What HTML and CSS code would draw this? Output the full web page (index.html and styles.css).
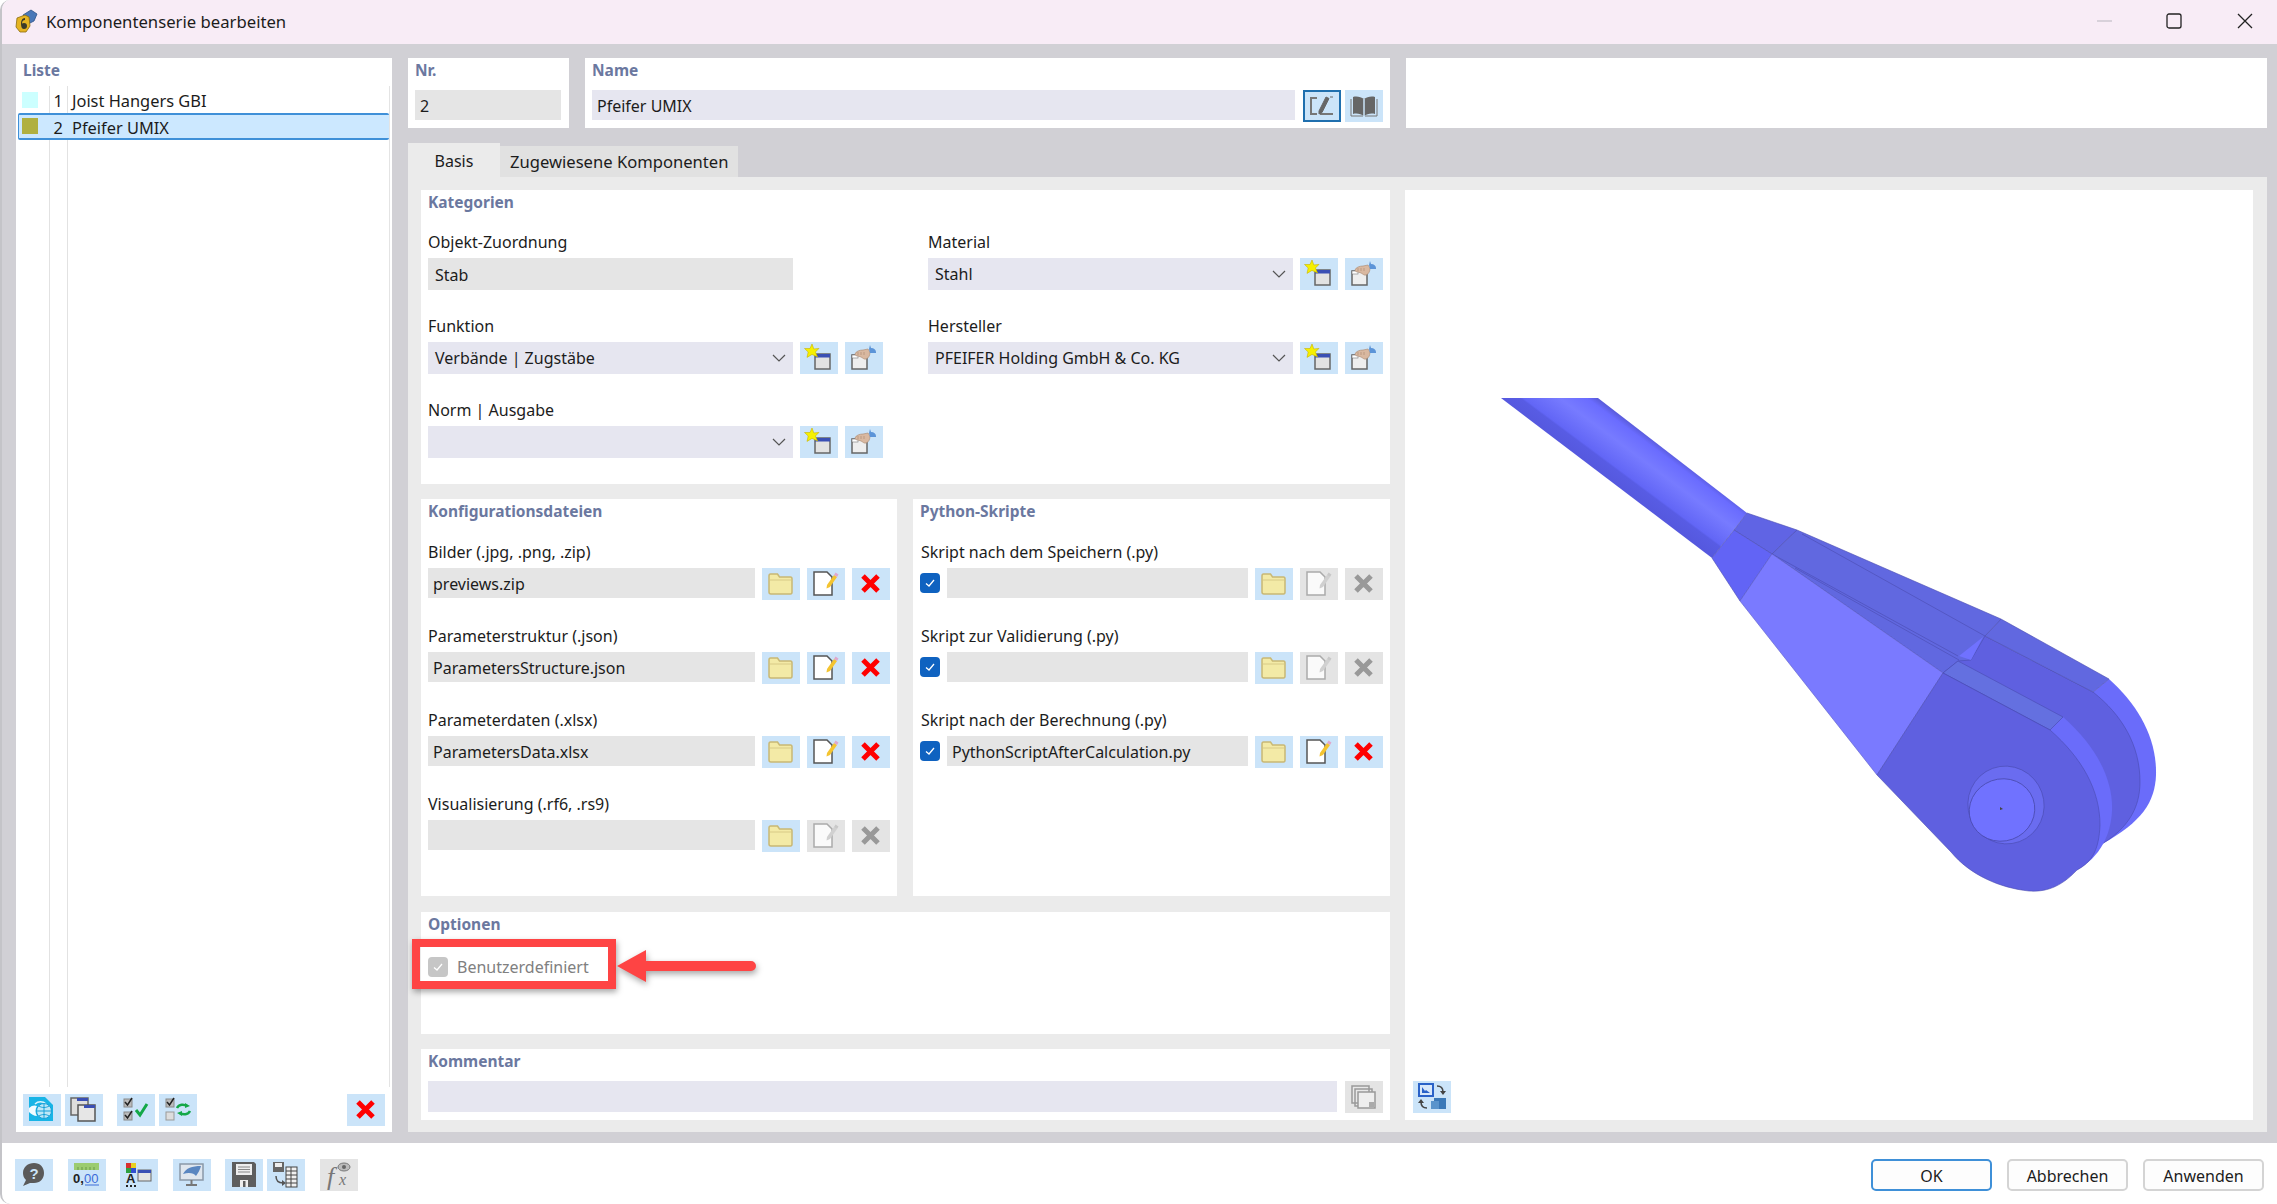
FILE: index.html
```html
<!DOCTYPE html>
<html lang="de">
<head>
    <meta charset="UTF-8">
    <title>Komponentenserie bearbeiten</title>
    <link rel="stylesheet" href="styles.css">
</head>
<body>

<!-- Icon set -->
<svg class="icon-defs" width="0" height="0">
    <defs>
        <symbol id="i-new" viewBox="0 0 38 32">
            <rect x="15" y="12" width="15" height="15" fill="#e2e2e2" stroke="#666" stroke-width="1.5"/>
            <rect x="15" y="12" width="15" height="3.5" fill="#3a4fb4"/>
            <path d="M12 2l1.800 5 5.200-.6-3.600 3.600 2.200 5-5.600-2.600-5 3 1.200-5.400L4.500 6.500l5.500 0z" fill="#f6f000" stroke="#c8b400" stroke-width=".6"/>
        </symbol>
        <symbol id="i-hand" viewBox="0 0 38 32">
            <rect x="7" y="13" width="15" height="14" fill="#eee" stroke="#666" stroke-width="1.5"/>
            <rect x="7" y="13" width="6" height="3" fill="#fff" stroke="#777" stroke-width=".6"/>
            <path d="M10 12c1-3 5-4 8-4l5-1 2 3c0 3-1 6-4 7-2 .6-3-1-5-2l-3-1c-2 0-3-1-3-2z" fill="#d9b8a0" stroke="#a88870" stroke-width=".6"/>
            <path d="M13 10v3M16 10v3M19 10v3" stroke="#a88870" stroke-width=".6"/>
            <path d="M25 3l1 3c3 0 5 2 5 4v1h-6l-1-4z" fill="#5c94d8"/>
        </symbol>
        <symbol id="i-folder" viewBox="0 0 38 32">
            <path d="M7 8c0-1 .6-2 1.500-2h7l2 3h11c1 0 1.500 1 1.500 2v13c0 1-.6 2-1.500 2H9c-1 0-2-1-2-2z" fill="#f3eaa6" stroke="#c9b874" stroke-width="1.500"/>
            <path d="M8 12h21" stroke="#d8ca86" stroke-width="1"/>
        </symbol>
        <symbol id="i-doc" viewBox="0 0 38 32">
            <path d="M7 4h13l5 5v18H7z" fill="#fff" stroke="#555" stroke-width="1.500"/>
            <path d="M20 17l7-10 3 2-7 10-3.500 1.500z" fill="#f4c430"/>
            <path d="M27 7l1.500-2.500 3 2L30 9z" fill="#e0a8cc"/>
        </symbol>
        <symbol id="i-doc-off" viewBox="0 0 38 32">
            <path d="M7 4h13l5 5v18H7z" fill="#fafafa" stroke="#aaa" stroke-width="1.500"/>
            <path d="M20 17l7-10 3 2-7 10-3.500 1.500z" fill="#d0d0d0"/>
            <path d="M27 7l1.500-2.500 3 2L30 9z" fill="#c8c8c8"/>
        </symbol>
        <symbol id="i-x" viewBox="0 0 38 32">
            <path d="M11 8l15 15M26 8L11 23" fill="none" stroke="currentColor" stroke-width="5"/>
        </symbol>
        <symbol id="i-edit" viewBox="0 0 38 32">
            <path d="M14 8H8v16h6M17 24h13" fill="none" stroke="#777" stroke-width="2"/>
            <path d="M16 21l7-14 3 1.500-7 14-3 1.500zM27 7h3" fill="#666" stroke="#666" stroke-width="1"/>
        </symbol>
        <symbol id="i-book" viewBox="0 0 38 32">
            <path d="M19 9c-3-2-7-3-11-2v17c4-1 8 0 11 2 3-2 7-3 11-2V7c-4-1-8 0-11 2z" fill="#666"/>
            <path d="M19 9v17" stroke="#cbe4f9" stroke-width="1.500"/>
            <path d="M6 9v17h12M32 9v17H20" fill="none" stroke="#777" stroke-width="1"/>
        </symbol>
        <symbol id="i-globe" viewBox="0 0 38 32">
            <path d="M6 3h16l8 8v16H6z" fill="#18b4e6"/>
            <path d="M12 10c3-3 8-3 11 0" fill="none" stroke="#d8f2fb" stroke-width="1.500"/>
            <circle cx="21" cy="17" r="7.500" fill="#bfe8f7" stroke="#18a0d8" stroke-width="1"/>
            <path d="M14 17h14M21 10v14M16 12c3 2 7 2 10 0M16 22c3-2 7-2 10 0" fill="none" stroke="#18a0d8" stroke-width="1"/>
            <path d="M6 14c3-3 6-3 8-2-2 3-2 7 0 10-3 0-6-2-8-4z" fill="#f0fbff"/>
        </symbol>
        <symbol id="i-windows" viewBox="0 0 38 32">
            <rect x="6" y="4" width="17" height="17" fill="#ddd" stroke="#666" stroke-width="1.500"/>
            <rect x="12" y="4" width="11" height="3" fill="#3a4fb4"/>
            <rect x="13" y="11" width="17" height="16" fill="#e6e6e6" stroke="#555" stroke-width="1.500"/>
            <rect x="19" y="11" width="11" height="3" fill="#3a4fb4"/>
        </symbol>
        <symbol id="i-checks" viewBox="0 0 38 32">
            <rect x="7" y="5" width="8" height="8" fill="#bbb" stroke="#888"/>
            <rect x="7" y="18" width="8" height="8" fill="#bbb" stroke="#888"/>
            <path d="M8 8l2.500 3L15 4M8 21l2.500 3L15 17" fill="none" stroke="#222" stroke-width="1.500"/>
            <path d="M19 16l4 5 7-11" fill="none" stroke="#14a848" stroke-width="3"/>
        </symbol>
        <symbol id="i-swap-checks" viewBox="0 0 38 32">
            <rect x="7" y="5" width="8" height="8" fill="#bbb" stroke="#888"/>
            <rect x="7" y="18" width="8" height="8" fill="#ddd" stroke="#999"/>
            <path d="M8 8l2.500 3L15 4" fill="none" stroke="#222" stroke-width="1.500"/>
            <path d="M18 14c2-4 7-4 10-2M31 17c-2 4-7 4-10 2" fill="none" stroke="#14a848" stroke-width="2.500"/>
            <path d="M26 9l5 3-5 2zM23 22l-5-3 5-2z" fill="#14a848"/>
        </symbol>
        <symbol id="i-help" viewBox="0 0 38 32">
            <path d="M19 4c6 0 10 4 10 10s-4 10-10 10h-4l-7 3 3-6c-2-2-3-4-3-7 0-6 5-10 11-10z" fill="#5a5a5a"/>
            <text x="19" y="20" class="i-txt i-help-q">?</text>
        </symbol>
        <symbol id="i-num" viewBox="0 0 38 32">
            <rect x="6" y="4" width="25" height="7" fill="#9ccc70"/>
            <path d="M10 8v3M14 8v3M18 8v3M22 8v3M26 8v3" stroke="#6a9a48"/>
            <text x="5" y="24" class="i-txt i-num-a">0,</text>
            <text x="16" y="24" class="i-txt i-num-b">00</text>
            <path d="M17 26h14" stroke="#3c6cd8" stroke-width="1"/>
        </symbol>
        <symbol id="i-colors" viewBox="0 0 38 32">
            <rect x="6" y="4" width="5" height="5" fill="#d83030"/>
            <rect x="11" y="4" width="5" height="5" fill="#e8d020"/>
            <rect x="6" y="9" width="5" height="5" fill="#30a040"/>
            <rect x="11" y="9" width="5" height="5" fill="#3050d0"/>
            <text x="6" y="24" class="i-txt i-col-a">A</text>
            <path d="M6 27h2M10 27h2M14 27h2" stroke="#222" stroke-width="2"/>
            <rect x="18" y="11" width="13" height="11" fill="#e4e4e4" stroke="#666"/>
            <rect x="18" y="11" width="13" height="3" fill="#3a4fb4"/>
        </symbol>
        <symbol id="i-monitor" viewBox="0 0 38 32">
            <rect x="7" y="5" width="23" height="16" fill="#dfe6ee" stroke="#8a98a8" stroke-width="1.500"/>
            <path d="M10 15c3-6 9-8 18-8-1 4-3 7-5 10-2-3-7-4-13-2z" fill="#5a86c0"/>
            <path d="M18.500 21v4M13 26h11" stroke="#777" stroke-width="2"/>
        </symbol>
        <symbol id="i-save" viewBox="0 0 38 32">
            <path d="M7 3h22l2 2v23H7z" fill="#5e5e5e"/>
            <rect x="11" y="5" width="16" height="11" fill="#eee"/>
            <path d="M13 8h12M13 10.500h12M13 13h12" stroke="#888" stroke-width="1"/>
            <rect x="15" y="21" width="8" height="7" fill="#eee"/>
            <rect x="18" y="22" width="2.500" height="6" fill="#5e5e5e"/>
        </symbol>
        <symbol id="i-save-table" viewBox="0 0 38 32">
            <path d="M6 3h11v10H6z" fill="#666"/>
            <rect x="8" y="4" width="7" height="4" fill="#eee"/>
            <rect x="19" y="8" width="11" height="20" fill="#f0f0f0" stroke="#444"/>
            <path d="M19 12h11M19 16h11M19 20h11M19 24h11M24 8v20" stroke="#444" stroke-width="1"/>
            <path d="M9 17c0 5 3 7 7 7" fill="none" stroke="#555" stroke-width="1.500"/>
            <path d="M15 21l4 3-4 3z" fill="#555"/>
        </symbol>
        <symbol id="i-fx" viewBox="0 0 38 32">
            <text x="7" y="26" class="i-txt i-fx-a">f</text>
            <text x="19" y="26" class="i-txt i-fx-b">x</text>
            <ellipse cx="24" cy="8" rx="6" ry="4" fill="#bbb" stroke="#777"/>
            <circle cx="24" cy="8" r="2" fill="#666"/>
        </symbol>
        <symbol id="i-copy" viewBox="0 0 38 32">
            <path d="M7 5h17v17H7zM10 8h17v17H10z" fill="#e8e8e8" stroke="#999" stroke-width="1.500"/>
            <rect x="13" y="11" width="17" height="16" fill="#eee" stroke="#999" stroke-width="1.500"/>
            <rect x="24" y="21" width="5" height="5" fill="#aaa"/>
        </symbol>
        <symbol id="i-swap" viewBox="0 0 38 32">
            <rect x="6" y="3" width="14" height="12" fill="#d8e8fa" stroke="#2a62c8" stroke-width="2"/>
            <path d="M9 6v6h8l-4-3-1 1z" fill="#2a62c8"/>
            <rect x="21" y="17" width="12" height="11" fill="#3a78b8"/>
            <rect x="18" y="20" width="8" height="8" fill="#5a94cc"/>
            <path d="M24 5c4 0 6 2 6 6M14 27c-4 0-6-2-6-6" fill="none" stroke="#444" stroke-width="1.500"/>
            <path d="M27 10h6l-3 4zM11 22H5l3-4z" fill="#444"/>
        </symbol>
        <symbol id="i-tick" viewBox="0 0 20 20">
            <path d="M6 10.500l3 2.500 5-6" fill="none" stroke="#fff" stroke-width="1.300"/>
        </symbol>
        <symbol id="i-chev" viewBox="0 0 14 8">
            <path d="M1 1l6 6 6-6" fill="none" stroke="#555" stroke-width="1.200"/>
        </symbol>
    </defs>
</svg>

<div class="window">

    <!-- Title bar -->
    <div class="titlebar">
        <svg class="app-icon" width="24" height="24" viewBox="0 0 24 24">
            <path d="M9 6l8-5 6 4-3 7-6 3z" fill="#4a78b8" stroke="#2c5288" stroke-width=".8"/>
            <path d="M3 9l8-3 4 2 1 9-4 6H6l-4-5z" fill="#e6b422" stroke="#8a6c10" stroke-width=".8"/>
            <path d="M11 9c-3 0-4 3-4 6s1 5 3 5 3-1 3-3-1-3-3-3-2 1-2 1c0-3 1-4 3-4z" fill="#3a3a2a"/>
        </svg>
        <span class="title-text">Komponentenserie bearbeiten</span>
        <div class="win-controls">
            <svg width="16" height="16" viewBox="0 0 16 16"><path d="M0 8h15" stroke="#c4c0c8" stroke-width="1.200"/></svg>
            <svg class="win-max" width="16" height="16" viewBox="0 0 16 16"><rect x="1" y="1" width="14" height="14" rx="2" fill="none" stroke="#222" stroke-width="1.300"/></svg>
            <svg width="16" height="16" viewBox="0 0 16 16"><path d="M1 1l14 14M15 1L1 15" stroke="#222" stroke-width="1.300"/></svg>
        </div>
    </div>

    <div class="main">

        <!-- List -->
        <div class="list-panel">
            <div class="panel-title">Liste</div>
            <div class="list">
                <div class="list-row">
                    <span class="swatch swatch-cyan"></span>
                    <span class="list-no">1</span>
                    <span>Joist Hangers GBI</span>
                </div>
                <div class="list-row selected">
                    <span class="swatch swatch-olive"></span>
                    <span class="list-no">2</span>
                    <span>Pfeifer UMIX</span>
                </div>
            </div>
            <div class="list-tools">
                <button class="ib"><svg><use href="#i-globe"/></svg></button>
                <button class="ib"><svg><use href="#i-windows"/></svg></button>
                <button class="ib tool-gap"><svg><use href="#i-checks"/></svg></button>
                <button class="ib"><svg><use href="#i-swap-checks"/></svg></button>
                <button class="ib red tool-end"><svg><use href="#i-x"/></svg></button>
            </div>
        </div>

        <div class="content">

            <!-- Nr / Name -->
            <div class="head-row">
                <div class="panel nr-panel">
                    <div class="panel-title">Nr.</div>
                    <div class="input grey tight">2</div>
                </div>
                <div class="panel name-panel">
                    <div class="panel-title">Name</div>
                    <div class="row">
                        <div class="input lilac tight grow">Pfeifer UMIX</div>
                        <div class="name-btns">
                            <button class="ib focus"><svg><use href="#i-edit"/></svg></button>
                            <button class="ib"><svg><use href="#i-book"/></svg></button>
                        </div>
                    </div>
                </div>
                <div class="panel blank-panel"></div>
            </div>

            <!-- Tabs -->
            <div class="tabs">
                <div class="tab active">Basis</div>
                <div class="tab">Zugewiesene Komponenten</div>
            </div>

            <div class="tab-pane">
                <div class="form-col">

                    <div class="panel kat-panel">
                        <div class="panel-title">Kategorien</div>
                        <div class="kat-grid">
                            <div class="field">
                                <label>Objekt-Zuordnung</label>
                                <div class="row"><div class="input grey wide-pad grow">Stab</div><div class="btn-space"></div></div>
                            </div>
                            <div class="field">
                                <label>Material</label>
                                <div class="row">
                                    <div class="input lilac wide-pad grow select">Stahl<svg class="chev"><use href="#i-chev"/></svg></div>
                                    <button class="ib"><svg><use href="#i-new"/></svg></button>
                                    <button class="ib"><svg><use href="#i-hand"/></svg></button>
                                </div>
                            </div>
                            <div class="field">
                                <label>Funktion</label>
                                <div class="row">
                                    <div class="input lilac wide-pad grow select">Verbände | Zugstäbe<svg class="chev"><use href="#i-chev"/></svg></div>
                                    <button class="ib"><svg><use href="#i-new"/></svg></button>
                                    <button class="ib"><svg><use href="#i-hand"/></svg></button>
                                </div>
                            </div>
                            <div class="field">
                                <label>Hersteller</label>
                                <div class="row">
                                    <div class="input lilac wide-pad grow select">PFEIFER Holding GmbH &amp; Co. KG<svg class="chev"><use href="#i-chev"/></svg></div>
                                    <button class="ib"><svg><use href="#i-new"/></svg></button>
                                    <button class="ib"><svg><use href="#i-hand"/></svg></button>
                                </div>
                            </div>
                            <div class="field">
                                <label>Norm | Ausgabe</label>
                                <div class="row">
                                    <div class="input lilac wide-pad grow select"><svg class="chev"><use href="#i-chev"/></svg></div>
                                    <button class="ib"><svg><use href="#i-new"/></svg></button>
                                    <button class="ib"><svg><use href="#i-hand"/></svg></button>
                                </div>
                            </div>
                        </div>
                    </div>

                    <div class="files-row">
                        <div class="panel files-panel files-left">
                            <div class="panel-title">Konfigurationsdateien</div>
                            <div class="file-list">
                                <div class="field">
                                    <label>Bilder (.jpg, .png, .zip)</label>
                                    <div class="row">
                                        <div class="input grey tight grow">previews.zip</div>
                                        <button class="ib"><svg><use href="#i-folder"/></svg></button>
                                        <button class="ib"><svg><use href="#i-doc"/></svg></button>
                                        <button class="ib red"><svg><use href="#i-x"/></svg></button>
                                    </div>
                                </div>
                                <div class="field">
                                    <label>Parameterstruktur (.json)</label>
                                    <div class="row">
                                        <div class="input grey tight grow">ParametersStructure.json</div>
                                        <button class="ib"><svg><use href="#i-folder"/></svg></button>
                                        <button class="ib"><svg><use href="#i-doc"/></svg></button>
                                        <button class="ib red"><svg><use href="#i-x"/></svg></button>
                                    </div>
                                </div>
                                <div class="field">
                                    <label>Parameterdaten (.xlsx)</label>
                                    <div class="row">
                                        <div class="input grey tight grow">ParametersData.xlsx</div>
                                        <button class="ib"><svg><use href="#i-folder"/></svg></button>
                                        <button class="ib"><svg><use href="#i-doc"/></svg></button>
                                        <button class="ib red"><svg><use href="#i-x"/></svg></button>
                                    </div>
                                </div>
                                <div class="field">
                                    <label>Visualisierung (.rf6, .rs9)</label>
                                    <div class="row">
                                        <div class="input grey tight grow"></div>
                                        <button class="ib"><svg><use href="#i-folder"/></svg></button>
                                        <button class="ib off"><svg><use href="#i-doc-off"/></svg></button>
                                        <button class="ib off"><svg><use href="#i-x"/></svg></button>
                                    </div>
                                </div>
                            </div>
                        </div>

                        <div class="panel files-panel">
                            <div class="panel-title">Python-Skripte</div>
                            <div class="file-list">
                                <div class="field">
                                    <label class="label-py">Skript nach dem Speichern (.py)</label>
                                    <div class="row">
                                        <svg class="check"><use href="#i-tick"/></svg>
                                        <div class="input grey tight grow"></div>
                                        <button class="ib"><svg><use href="#i-folder"/></svg></button>
                                        <button class="ib off"><svg><use href="#i-doc-off"/></svg></button>
                                        <button class="ib off"><svg><use href="#i-x"/></svg></button>
                                    </div>
                                </div>
                                <div class="field">
                                    <label class="label-py">Skript zur Validierung (.py)</label>
                                    <div class="row">
                                        <svg class="check"><use href="#i-tick"/></svg>
                                        <div class="input grey tight grow"></div>
                                        <button class="ib"><svg><use href="#i-folder"/></svg></button>
                                        <button class="ib off"><svg><use href="#i-doc-off"/></svg></button>
                                        <button class="ib off"><svg><use href="#i-x"/></svg></button>
                                    </div>
                                </div>
                                <div class="field">
                                    <label class="label-py">Skript nach der Berechnung (.py)</label>
                                    <div class="row">
                                        <svg class="check"><use href="#i-tick"/></svg>
                                        <div class="input grey tight grow">PythonScriptAfterCalculation.py</div>
                                        <button class="ib"><svg><use href="#i-folder"/></svg></button>
                                        <button class="ib"><svg><use href="#i-doc"/></svg></button>
                                        <button class="ib red"><svg><use href="#i-x"/></svg></button>
                                    </div>
                                </div>
                            </div>
                        </div>
                    </div>

                    <div class="panel options-panel">
                        <div class="panel-title">Optionen</div>
                        <div class="option-line">
                            <svg class="check check-off"><use href="#i-tick"/></svg>
                            <span>Benutzerdefiniert</span>
                        </div>
                        <!-- red callout over the option -->
                        <div class="callout-box"></div>
                        <svg class="callout-arrow" width="150" height="40" viewBox="0 0 150 40">
                            <path d="M2 18L31 2v11h105a5 5 0 0 1 0 10H31v11z" fill="#fe4444"/>
                        </svg>
                    </div>

                    <div class="panel comment-panel">
                        <div class="panel-title">Kommentar</div>
                        <div class="row comment-row">
                            <div class="input lilac grow"></div>
                            <button class="ib off"><svg><use href="#i-copy"/></svg></button>
                        </div>
                    </div>
                </div>

                <!-- Preview -->
                <div class="panel preview-panel">
                    <svg class="model" width="720" height="540" viewBox="0 0 720 540">
                        <defs>
                            <linearGradient id="rod" gradientUnits="userSpaceOnUse" x1="146" y1="108" x2="181" y2="61">
                                <stop offset="0" stop-color="#5558de"/>
                                <stop offset=".22" stop-color="#585ce4"/>
                                <stop offset=".25" stop-color="#6266f6"/>
                                <stop offset=".62" stop-color="#777bff"/>
                                <stop offset=".9" stop-color="#6a6cff"/>
                                <stop offset="1" stop-color="#5a5cdc"/>
                            </linearGradient>
                        </defs>
                        <!-- rim of the back plate -->
                        <path d="M649 309C678 335 697 368 696 405C695 432 682 452 642 474L630 400L633 322Z" fill="#6a6cfa"/>
                        <!-- back plate -->
                        <path d="M525 266L633 322C662 345 680 375 680 412C680 438 668 458 642 474L560 470L483 303L499 286Z" fill="#5f60e0" stroke="#4a4cb0" stroke-width=".6"/>
                        <path d="M541 249L649 309L633 322L525 266Z" fill="#6168e0" stroke="#4a4cb0" stroke-width=".6"/>
                        <!-- rim of the front plate -->
                        <path d="M603 347C635 375 653 408 652 440C651 465 640 487 617 500L600 420L590 360Z" fill="#6a6cfa"/>
                        <!-- rod and collar -->
                        <path d="M41 28L138 28L287 143L252 188Z" fill="url(#rod)"/>
                        <path d="M287 143L337 160L312 184L274 160Z" fill="#6064e4" stroke="#4a4cb0" stroke-width=".6"/>
                        <path d="M252 188L274 160L312 184L280 231Z" fill="#6264f5" stroke="#4a4cb0" stroke-width=".6"/>
                        <!-- top band -->
                        <path d="M337 160L541 249L525 266L511 290L498 291L483 303L312 184Z" fill="#6168e0" stroke="#4a4cb0" stroke-width=".6"/>
                        <path d="M335 198L499 290M312 184L498 286M342 164L525 266" fill="none" stroke="#4a4cb0" stroke-width=".6"/>
                        <path d="M523 267L511 290L499 286Z" fill="#7072ff"/>
                        <path d="M498 291L603 347L590 360L483 303Z" fill="#6470e0" stroke="#4a4cb0" stroke-width=".6"/>
                        <!-- light face -->
                        <path d="M280 231L312 184L483 303L417 405Z" fill="#7a7aff" stroke="#5a5cc8" stroke-width=".6"/>
                        <!-- front plate -->
                        <path d="M417 405L483 303L590 360C622 388 640 420 640 455C639 480 632 492 617 500C600 518 585 522 569 521C540 518 510 505 491 482Z" fill="#5f60e0" stroke="#4a4cb0" stroke-width=".6"/>
                        <!-- pin -->
                        <ellipse cx="546" cy="435" rx="38" ry="39" transform="rotate(-20 546 435)" fill="#6a6cf0" stroke="#4a4cb0" stroke-width=".6"/>
                        <ellipse cx="542" cy="440" rx="33" ry="31" transform="rotate(-20 542 440)" fill="#7072ff" stroke="#4a4cb0" stroke-width=".8"/>
                        <path d="M540 437l3 2-3 1z" fill="#444"/>
                    </svg>
                    <button class="ib swap-btn"><svg><use href="#i-swap"/></svg></button>
                </div>
            </div>
        </div>
    </div>

    <!-- Footer -->
    <div class="footer">
        <button class="ib"><svg><use href="#i-help"/></svg></button>
        <button class="ib"><svg><use href="#i-num"/></svg></button>
        <button class="ib foot-close"><svg><use href="#i-colors"/></svg></button>
        <button class="ib"><svg><use href="#i-monitor"/></svg></button>
        <div class="foot-pair foot-close">
            <button class="ib"><svg><use href="#i-save"/></svg></button>
            <button class="ib"><svg><use href="#i-save-table"/></svg></button>
        </div>
        <button class="ib off"><svg><use href="#i-fx"/></svg></button>
        <div class="foot-actions">
            <button class="action primary">OK</button>
            <button class="action">Abbrechen</button>
            <button class="action">Anwenden</button>
        </div>
    </div>
</div>

</body>
</html>
```

FILE: styles.css
```css
/* General */
html, body {
    margin: 0;
    padding: 0;
    background: #fff;
}

body {
    width: 2277px;
    height: 1204px;
    overflow: hidden;
    font-family: "Noto Sans", "Open Sans", sans-serif;
    font-size: 16px;
    color: #1c1c1c;
}

.icon-defs {
    position: absolute;
}

.window {
    box-sizing: border-box;
    height: 1204px;
    display: flex;
    flex-direction: column;
    border-left: 2px solid #c4c4c8;
    border-radius: 10px 0 0 10px;
    overflow: hidden;
}

/* Title bar */
.titlebar {
    height: 44px;
    box-sizing: border-box;
    flex: none;
    display: flex;
    align-items: center;
    background: #f8ecf6;
    padding: 0 0 2px 12px;
}

.app-icon {
    margin-right: 8px;
}

.title-text {
    font-size: 16.7px;
}

.win-controls {
    margin-left: auto;
    margin-right: 24px;
    display: flex;
    gap: 54px;
}

.win-max {
    margin-left: -1px;
    margin-right: 1px;
}

/* Main area */
.main {
    flex: none;
    height: 1099px;
    box-sizing: border-box;
    display: flex;
    gap: 16px;
    padding: 14px 10px 11px 14px;
    background: #d1d0d5;
}

.panel, .list-panel {
    background: #fff;
    box-sizing: border-box;
}

.panel-title {
    height: 25px;
    line-height: 25px;
    margin-bottom: 1px;
    padding-left: 7px;
    font-weight: 700;
    font-size: 15.5px;
    color: #6b789f;
}

/* List */
.list-panel {
    width: 376px;
    display: flex;
    flex-direction: column;
}

.list {
    flex: 1;
    margin: 2px 2px 7px 2px;
    border-right: 1px solid #e4e4e4;
    background:
        linear-gradient(#e2e2e2, #e2e2e2) 31px 0 / 1px 100% no-repeat,
        linear-gradient(#e2e2e2, #e2e2e2) 49px 0 / 1px 100% no-repeat;
}

.list-row {
    box-sizing: border-box;
    height: 27px;
    display: flex;
    align-items: center;
    padding-top: 2px;
    font-size: 16.4px;
}

.list-row.selected {
    background-color: #cce8ff;
    border: 2px solid #3f90d8;
    border-left-width: 1px;
    border-right: none;
    border-radius: 2px;
    padding-top: 1px;
}

.swatch {
    width: 16px;
    height: 16px;
    margin-left: 4px;
    margin-top: -2px;
    flex: none;
}

.swatch-cyan {
    background: #ccffff;
}

.swatch-olive {
    background: #b0b040;
}

.selected .swatch {
    margin-left: 3px;
}

.list-no {
    width: 25px;
    text-align: right;
    margin-right: 9px;
    flex: none;
}

.list-tools {
    display: flex;
    gap: 4px;
    padding: 0 7px 6px 7px;
}

.tool-gap {
    margin-left: 10px;
}

.tool-end {
    margin-left: auto;
}

/* Buttons with an icon */
.ib {
    width: 38px;
    height: 32px;
    flex: none;
    padding: 0;
    border: none;
    background: #cbe4f9;
    color: #999;
    display: block;
}

.ib svg {
    width: 38px;
    height: 32px;
    display: block;
}

.ib.red {
    color: #f00;
}

.ib.off {
    background: #e4e4e4;
}

.ib.focus {
    box-sizing: border-box;
    border: 2px solid #1f6fae;
}

.ib.focus svg {
    margin: -2px;
}

/* Icon text */
.i-txt {
    font-family: "Liberation Sans", sans-serif;
}

.i-help-q {
    font-size: 15px;
    font-weight: 700;
    fill: #cbe4f9;
    text-anchor: middle;
}

.i-num-a {
    font-size: 13px;
    font-weight: 700;
    fill: #222;
}

.i-num-b {
    font-size: 13px;
    fill: #3c6cd8;
}

.i-col-a {
    font-size: 13px;
    font-weight: 700;
    fill: #222;
}

.i-fx-a, .i-fx-b {
    font-family: "Liberation Serif", serif;
    font-style: italic;
    fill: #777;
}

.i-fx-a {
    font-size: 26px;
}

.i-fx-b {
    font-size: 16px;
}

/* Content */
.content {
    flex: 1;
    display: flex;
    flex-direction: column;
}

.head-row {
    display: flex;
    gap: 16px;
    height: 70px;
    flex: none;
}

.nr-panel {
    width: 161px;
}

.name-panel {
    width: 805px;
}

.blank-panel {
    flex: 1;
}

.nr-panel .input {
    margin: 7px 8px 0 7px;
}

.name-panel .row {
    margin: 7px 7px 0 7px;
    gap: 8px;
}

.name-btns {
    display: flex;
    gap: 4px;
}

.row {
    display: flex;
    align-items: flex-start;
    gap: 7px;
}

.grow {
    flex: 1;
    min-width: 0;
}

.input {
    box-sizing: border-box;
    height: 30px;
    line-height: 32px;
    white-space: nowrap;
}

.input.tight {
    padding-left: 5px;
}

.input.wide-pad {
    height: 32px;
    line-height: 34px;
    padding-left: 7px;
}

.grey {
    background: #e5e5e5;
}

.lilac {
    background: #e6e6f0;
}

.select {
    display: flex;
    align-items: center;
    padding-right: 7px;
}

.chev {
    width: 14px;
    height: 8px;
    margin-left: auto;
}

.btn-space {
    width: 83px;
    height: 32px;
    flex: none;
}

/* Tabs */
.tabs {
    display: flex;
    align-items: flex-end;
    height: 34px;
    margin-top: 15px;
    flex: none;
}

.tab {
    box-sizing: border-box;
    height: 31px;
    line-height: 32px;
    background: #e1e1e1;
    padding: 0 10px;
    font-size: 16.6px;
}

.tab.active {
    height: 34px;
    line-height: 36px;
    width: 92px;
    text-align: center;
    background: #ebebeb;
    font-size: 16px;
}

.tab-pane {
    flex: 1;
    display: flex;
    gap: 15px;
    background: #ebebeb;
    padding: 13px 14px 12px 13px;
}

.form-col {
    width: 969px;
    flex: none;
    display: flex;
    flex-direction: column;
    gap: 15px;
}

/* Form panels */
.kat-panel {
    height: 294px;
}

.kat-grid {
    display: grid;
    grid-template-columns: 455px 455px;
    column-gap: 45px;
    row-gap: 23px;
    padding: 13px 7px 0 7px;
}

.field label {
    display: block;
    height: 26px;
    line-height: 26px;
    margin-bottom: 3px;
}

.files-row {
    display: flex;
    gap: 16px;
    height: 397px;
    flex: none;
}

.files-panel {
    flex: 1;
}

.files-left {
    flex: none;
    width: 476px;
}

.file-list {
    display: flex;
    flex-direction: column;
    gap: 23px;
    padding: 14px 7px 0 7px;
}

.label-py {
    padding-left: 1px;
}

.check {
    width: 20px;
    height: 20px;
    margin-top: 5px;
    flex: none;
    background: #0f62c0;
    border-radius: 4px;
}

.check-off {
    background: #c6c6c6;
    margin-top: 0;
}

/* Options */
.options-panel {
    position: relative;
    height: 122px;
    margin-top: 1px;
}

.option-line {
    display: flex;
    align-items: center;
    gap: 9px;
    padding: 18px 0 0 7px;
    color: #808080;
}

.callout-box {
    position: absolute;
    left: -9px;
    top: 27px;
    width: 204px;
    height: 50px;
    box-sizing: border-box;
    border: 8px solid #fe4444;
    box-shadow: 1px 3px 6px rgba(0, 0, 0, 0.35);
}

.callout-arrow {
    position: absolute;
    left: 194px;
    top: 36px;
    filter: drop-shadow(1px 3px 3px rgba(0, 0, 0, 0.35));
}

/* Comment */
.comment-panel {
    flex: 1;
}

.comment-row {
    margin: 7px 7px 0 7px;
    gap: 8px;
}

.comment-row .input {
    height: 31px;
}

/* Preview */
.preview-panel {
    flex: 1;
    display: flex;
    flex-direction: column;
    padding: 180px 0 7px 55px;
}

.model {
    flex: none;
}

.swap-btn {
    margin-top: auto;
    margin-left: -47px;
}

/* Footer */
.footer {
    flex: 1;
    display: flex;
    align-items: flex-start;
    gap: 15px;
    padding: 16px 13px 0 13px;
}

.foot-close {
    margin-left: -1px;
}

.foot-pair {
    display: flex;
    gap: 4px;
}

.foot-actions {
    margin-left: auto;
    display: flex;
    gap: 15px;
}

.action {
    width: 121px;
    height: 32px;
    box-sizing: border-box;
    background: #fdfdfd;
    border: 2px solid #d4d4d4;
    border-radius: 5px;
    font: inherit;
    color: #1c1c1c;
    padding: 1px 0 0;
}

.action.primary {
    border-color: #3f90d8;
}
```
